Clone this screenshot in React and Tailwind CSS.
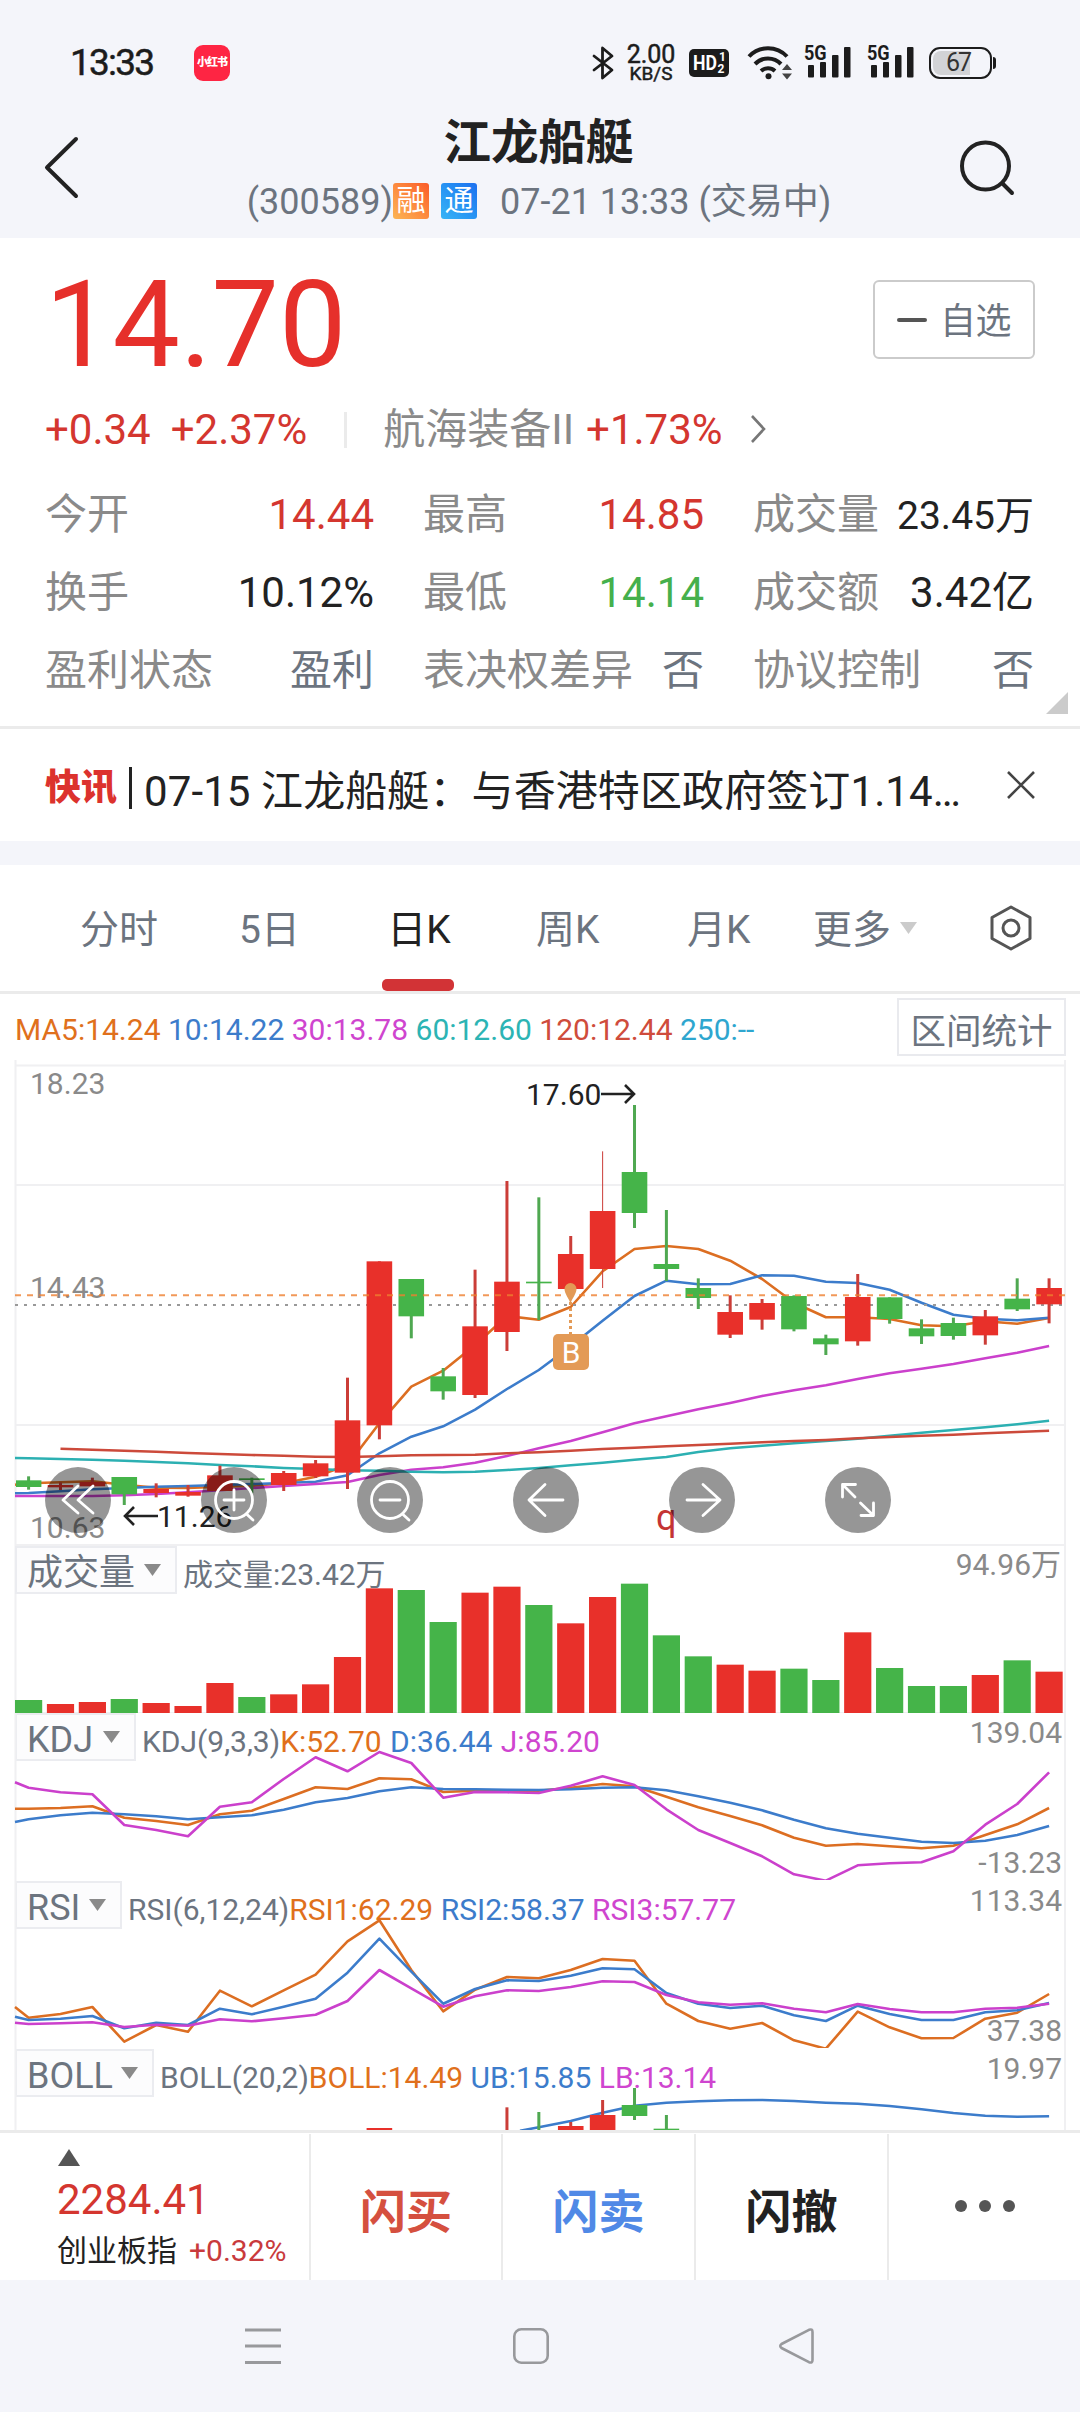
import React from "react";

const RED = "#e8302a";
const GREEN = "#45b449";
const WICK_RED = "#cb3d38";
const WICK_GREEN = "#4fa851";
const ORANGE = "#dc6e22";
const BLUE = "#3c7ccb";
const MAGENTA = "#cb40cc";
const TEAL = "#2cb0b2";
const BRICK = "#cc4a3b";

// x centre of the n-th trading day
const cx = (i) => 28.6 + i * 31.89;

// [direction, high, body top, body bottom, low], in thirds of a pixel
const CANDLES = [
  ["g", 1249, 1261, 1281, 1289], ["r", 1267, 1275, 1282, 1290], ["r", 1253, 1266, 1279, 1279],
  ["g", 1251, 1251, 1303, 1335], ["r", 1270, 1287, 1299, 1312], ["r", 1275, 1296, 1307, 1310],
  ["r", 1217, 1246, 1293, 1293], ["g", 1253, 1255, 1260, 1300], ["r", 1233, 1239, 1275, 1293],
  ["r", 1200, 1210, 1249, 1254], ["r", 953, 1081, 1238, 1287], ["r", 604, 604, 1096, 1138],
  ["g", 657, 657, 769, 835], ["g", 924, 949, 994, 1019], ["r", 629, 799, 1005, 1014],
  ["r", 363, 665, 816, 873], ["g", 412, 665, 670, 780], ["r", 528, 582, 687, 687],
  ["r", 274, 453, 627, 684], ["g", 135, 336, 459, 504], ["g", 450, 612, 627, 663],
  ["g", 655, 684, 714, 747], ["r", 706, 756, 824, 834], ["r", 717, 729, 779, 809],
  ["g", 706, 708, 808, 814], ["g", 824, 835, 853, 885], ["r", 642, 711, 844, 857],
  ["g", 712, 712, 777, 791], ["g", 778, 805, 829, 852], ["g", 773, 789, 828, 839],
  ["r", 750, 769, 826, 854], ["g", 655, 716, 748, 753], ["r", 655, 684, 733, 790],
];

const MA5 = [1270, 1267, 1264, 1274, 1283, 1284, 1280, 1278, 1270, 1250, 1215, 1090, 980, 932, 855, 768, 779, 741, 634, 567, 558, 567, 602, 657, 728, 772, 772, 777, 796, 799, 784, 791, 774];
const MA10 = [1299, 1294, 1288, 1284, 1280, 1278, 1275, 1272, 1269, 1265, 1246, 1180, 1130, 1099, 1049, 987, 930, 859, 782, 708, 662, 673, 672, 646, 647, 665, 669, 689, 728, 764, 776, 781, 773];
const MA30 = [1308, 1308, 1308, 1306, 1302, 1297, 1291, 1284, 1278, 1272, 1266, 1245, 1229, 1222, 1208, 1188, 1165, 1143, 1117, 1090, 1069, 1048, 1029, 1008, 991, 976, 957, 940, 926, 912, 895, 878, 858];
const MA60 = [1195, 1197, 1199, 1202, 1206, 1210, 1215, 1219, 1224, 1227, 1231, 1232, 1235, 1237, 1235, 1230, 1224, 1216, 1208, 1199, 1191, 1176, 1165, 1157, 1150, 1143, 1136, 1127, 1118, 1110, 1102, 1093, 1082];
const MA120 = [null, 1166, 1169, 1172, 1175, 1179, 1182, 1185, 1187, 1190, 1191, 1189, 1186, 1185, 1184, 1180, 1177, 1172, 1167, 1163, 1159, 1155, 1151, 1147, 1143, 1140, 1135, 1131, 1127, 1124, 1120, 1116, 1112];

const VOLUME = [480, 492, 486, 477, 489, 498, 429, 471, 463, 433, 351, 145, 150, 246, 158, 140, 195, 250, 171, 131, 286, 349, 374, 392, 386, 420, 277, 384, 438, 438, 405, 361, 395];

const K = [806, 804, 799, 833, 843, 855, 823, 812, 777, 742, 747, 715, 718, 756, 752, 752, 752, 743, 732, 739, 770, 802, 828, 856, 893, 917, 912, 919, 925, 917, 885, 853, 804];
const D = [838, 826, 818, 823, 829, 838, 832, 826, 809, 787, 774, 754, 742, 747, 748, 749, 750, 748, 743, 742, 751, 769, 788, 811, 839, 865, 881, 893, 905, 909, 902, 885, 858];
const J = [743, 757, 763, 855, 870, 889, 800, 787, 717, 652, 694, 636, 669, 773, 756, 757, 759, 737, 709, 735, 808, 870, 909, 949, 1003, 1022, 976, 970, 967, 934, 854, 792, 697];

const RSI1 = [413, 402, 381, 485, 435, 455, 332, 379, 331, 284, 184, 121, 270, 394, 329, 291, 295, 270, 237, 242, 371, 423, 446, 429, 481, 506, 395, 442, 475, 474, 416, 398, 342];
const RSI2 = [420, 416, 408, 445, 428, 435, 386, 403, 380, 356, 278, 176, 275, 371, 327, 301, 303, 287, 265, 268, 339, 371, 384, 377, 406, 423, 377, 402, 420, 420, 397, 391, 369];
const RSI3 = [432, 430, 427, 441, 434, 437, 418, 424, 415, 404, 363, 270, 325, 380, 349, 331, 333, 321, 304, 306, 345, 367, 374, 370, 386, 397, 372, 387, 397, 397, 386, 383, 371];

const UPPER = [742, 723, 698, 677, 668, 664, 661, 660, 663, 668, 671, 678, 688, 699, 707, 710, 709];
const BOLL_CANDLES = [
  [11, "r", 744, 744, 800], [15, "r", 682, 760, 800], [16, "g", 696, 760, 800], [17, "r", 726, 738, 800],
  [18, "r", 660, 705, 800], [19, "g", 624, 675, 708, 720], [20, "g", 705, 746, 800],
];

function Series({ data, color, start, from = 0 }) {
  const pts = data
    .map((v, i) => (v === null ? null : `${cx(i + from).toFixed(1)},${(v / 3).toFixed(1)}`))
    .filter(Boolean);
  if (start) pts.unshift(`${start[0]},${(start[1] / 3).toFixed(1)}`);
  return <polyline points={pts.join(" ")} fill="none" stroke={color} strokeWidth="2.6" strokeLinejoin="round" />;
}

function Candle({ i, dir, high, top, bottom, low, thin }) {
  const red = dir === "r";
  const x = cx(i);
  const left = Math.max(x - 12.8, 16);
  return (
    <g>
      <rect x={x - (thin ? 0.5 : 1.5)} y={high / 3} width={thin ? 1 : 3} height={(low - high) / 3} fill={red ? WICK_RED : WICK_GREEN} />
      <rect x={left} y={top / 3} width={x + 12.8 - left} height={(bottom - top) / 3} fill={red ? RED : GREEN} />
    </g>
  );
}

function Plot({ height, children, shift = 0, clip = false }) {
  return (
    <svg className={clip ? "absolute inset-0 overflow-hidden" : "absolute inset-0 overflow-visible"} width="1080" height={height}>
      <path d={`M15.5 0V${height}M1065 0V${height}`} stroke="#f0f0f2" strokeWidth="2" />
      <g transform={`translate(0 ${-shift})`}>{children}</g>
    </svg>
  );
}

function Picker({ children, width }) {
  return (
    <div className={`${width} ml-[15px] flex h-[48px] items-center justify-between self-start border-2 border-[#ebecf0] bg-[#fcfcfd] pt-[5px] pr-[14px] pl-[10px] text-[36px] leading-[36px] text-[#6c747f]`}>
      <span>{children}</span>
      <svg width="17" height="12" className="mb-[6px]"><path d="M0 0H17L8.5 12Z" fill="#8a8a8a" /></svg>
    </div>
  );
}

function PanelHead({ name, width, params, values }) {
  return (
    <div className="relative flex h-[57px] items-center text-[30px] leading-[30px] whitespace-pre">
      <Picker width={width}>{name}</Picker>
      <span className="ml-[6px] text-[#6c747f]">{params}</span>
      {values}
    </div>
  );
}

const SCALE = "absolute text-[30px] leading-[30px] text-[#8a8a8a]";

function RoundButton({ children }) {
  return (
    <div className="flex h-[66px] w-[66px] items-center justify-center rounded-full bg-black/41">
      <svg width="66" height="66" viewBox="-33 -33 66 66" fill="none" stroke="#fff" strokeWidth="2.8" strokeLinecap="round" strokeLinejoin="round">
        {children}
      </svg>
    </div>
  );
}

function Signal() {
  return (
    <div className="relative h-[36px] w-[47px] text-[#1c1c1c]">
      <span className="absolute -top-[2px] left-0 origin-left scale-x-[0.86] text-[21px] leading-[20px] font-bold">5G</span>
      <svg className="absolute inset-0" width="47" height="36" fill="#1c1c1c">
        <rect x="4" y="20" width="6" height="12.500" rx="1" />
        <rect x="16" y="17" width="6" height="15.500" rx="1" />
        <rect x="28" y="10" width="6.5" height="22.500" rx="1" />
        <rect x="40" y="2" width="6.5" height="30.500" rx="1" />
      </svg>
    </div>
  );
}

function StatusBar() {
  return (
    <div className="flex h-[126px] items-center">
      <span className="ml-[70px] w-[89px] text-[37px] leading-[40px] tracking-[-1.8px] text-[#1c1c1c] [-webkit-text-stroke:0.5px_#1c1c1c]">13:33</span>
      <div className="ml-[35px] flex h-[36px] w-[36px] items-center justify-center rounded-[9px] bg-[#fe2543] text-[11px] leading-[12px] font-black tracking-[-1px] whitespace-nowrap text-white">小红书</div>
      <svg className="ml-[362px]" width="23" height="34" viewBox="0 0 23 34" fill="none" stroke="#1c1c1c" strokeWidth="2.8" strokeLinejoin="round" strokeLinecap="round">
        <path d="M2 10 20 24 10.500 32V2L20 10 2 24" />
      </svg>
      <div className="ml-[10px] flex w-[52px] flex-col items-center pt-px text-[#1c1c1c]">
        <span className="text-[25px] leading-[20px]  [-webkit-text-stroke:0.5px_#1c1c1c]">2.00</span>
        <span className="text-[19px] leading-[18px] [-webkit-text-stroke:0.5px_#1c1c1c]">KB/S</span>
      </div>
      <div className="ml-[12px] flex h-[28px] w-[40px] items-center rounded-[5px] bg-[#1c1c1c] pl-[4px] text-white">
        <span className="w-[23px] origin-left scale-x-[0.84] text-[21px] leading-[24px] font-bold">HD</span>
        <span className="flex flex-col text-center text-[12px] leading-[12px] font-bold"><span className="pl-[3px]">1</span><span>2</span></span>
      </div>
      <svg className="ml-[18px]" width="46" height="36" viewBox="0 0 46 36" fill="none" stroke="#1c1c1c" strokeWidth="4">
        <path d="M2 11.500a26 26 0 0 1 38 0M8 19a18 18 0 0 1 26 0M14 26a10.500 10.500 0 0 1 14 0" />
        <circle cx="21.500" cy="31.300" r="3" fill="#1c1c1c" stroke="none" />
        <path d="M35 25 40 19 45 25ZM35 28.500 40 34.500 45 28.500Z" fill="#444" stroke="none" />
      </svg>
      <div className="ml-[11px]"><Signal /></div>
      <div className="ml-[16px]"><Signal /></div>
      <div className="ml-[15px] flex items-center">
        <div className="flex h-[32px] w-[63px] items-center rounded-[11px] border-2 border-[#1c1c1c] p-[2px]">
          <div className="flex h-[24px] w-[37px] items-center justify-end rounded-l-[8px] bg-[#d2d3d6] text-[25px] leading-[24px] tracking-[-2px] text-[#333]">67</div>
        </div>
        <div className="ml-px h-[12px] w-[3px] rounded-r bg-[#1c1c1c]" />
      </div>
    </div>
  );
}

function Header() {
  return (
    <header className="flex h-[112px] items-start">
      <svg className="mt-[8px] ml-[44px]" width="40" height="66" viewBox="0 0 40 66" fill="none" stroke="#222" strokeWidth="4" strokeLinecap="round" strokeLinejoin="round">
        <path d="M32 5 3 33.500 32 62" />
      </svg>
      <div className="ml-[36px] flex flex-1 flex-col items-center">
        <h1 className="-mt-[9px] text-[47.500px] leading-[52px] font-bold text-[#222]">江龙船艇</h1>
        <div className="mt-[12px] ml-[1px] flex items-center text-[36px] leading-[42px] whitespace-nowrap text-[#6c747f]">
          <span>(300589)</span>
          <span className="flex h-[36px] w-[36px] -mt-[3px] items-center justify-center rounded-[3px] bg-linear-to-tr from-[#fbb454] to-[#fa5a28] text-[29px] leading-[30px] text-white">融</span>
          <span className="ml-[12px] flex h-[36px] w-[36px] -mt-[3px] items-center justify-center rounded-[3px] bg-linear-to-tr from-[#38b4f6] to-[#1f70ef] text-[29px] leading-[30px] text-white">通</span>
          <span className="ml-[23px]">07-21 13:33 (交易中)</span>
        </div>
      </div>
      <svg className="mt-[12px] mr-[61px]" width="62" height="62" viewBox="0 0 62 62" fill="none" stroke="#222" strokeWidth="4" strokeLinecap="round">
        <circle cx="28.500" cy="28" r="23.500" />
        <path d="M45.500 45.500 55 55" />
      </svg>
    </header>
  );
}

function Stat({ label, value, tone }) {
  return (
    <div className="flex h-[78px] items-center justify-between">
      <span className="text-[#8a8a8a]">{label}</span>
      <span className={tone}>{value}</span>
    </div>
  );
}

function Quote() {
  const r = "text-[#d4362f]";
  const k = "text-[#222]";
  const s = "text-[#6c747f]";
  return (
    <section className="relative h-[491px] border-b-[3px] border-[#ebebeb] bg-white">
      <div className="flex h-[144px] items-start justify-between pr-[45px] pl-[45px]">
        <span className="mt-[27px] text-[120px] leading-[120px] text-[#e6302b]">14.70</span>
        <div className="mt-[42px] flex h-[79px] w-[162px] items-center rounded-[6px] border-2 border-[#cbcbcb] pl-[22px] text-[36px] leading-[42px] text-[#6c747f]">
          <span className="mr-[13px] h-[4px] w-[30px] rounded-sm bg-[#555]" />
          <span className="pt-[4px] tracking-[-0.500px]">自选</span>
        </div>
      </div>
      <div className="mt-[16px] flex h-[64px] items-center pl-[45px] text-[42px] leading-[48px] text-[#d4362f]">
        <span>+0.34</span>
        <span className="ml-[20px]">+2.37%</span>
        <span className="ml-[37px] h-[36px] w-[3px] bg-[#ebebeb]" />
        <span className="ml-[36px] text-[#8a8a8a]">航海装备II</span>
        <span className="ml-[12px]">+1.73%</span>
        <svg className="-mt-[2px] ml-[26px]" width="20" height="32" viewBox="0 0 20 32" fill="none" stroke="#777" strokeWidth="2.600"><path d="M3 3 15 16 3 29" /></svg>
      </div>
      <div className="mt-[14px] grid grid-cols-[329px_281px_281px] gap-x-[49px] pl-[45px] text-[42px] leading-[48px]">
        <Stat label="今开" value="14.44" tone={r} />
        <Stat label="最高" value="14.85" tone={r} />
        <Stat label="成交量" value="23.45万" tone="pt-[2px] text-[39px] text-[#222]" />
        <Stat label="换手" value="10.12%" tone={k} />
        <Stat label="最低" value="14.14" tone="text-[#45b04c]" />
        <Stat label="成交额" value="3.42亿" tone={k} />
        <Stat label="盈利状态" value="盈利" tone={s} />
        <Stat label="表决权差异" value="否" tone={s} />
        <Stat label="协议控制" value="否" tone={s} />
      </div>
      <svg className="absolute right-[12px] bottom-[12px]" width="22" height="22"><path d="M22 0V22H0Z" fill="#cbcbcb" /></svg>
    </section>
  );
}

function News() {
  return (
    <section className="flex h-[112px] items-center bg-white pl-[45px]">
      <span className="mt-[5px] text-[36px] leading-[42px] font-black text-[#dc322d]">快讯</span>
      <span className="mt-[6px] ml-[12px] h-[42px] w-[3px] bg-[#222]" />
      <span className="mt-[13px] ml-[12px] w-[830px] text-[42px] leading-[48px] tracking-[0.100px] whitespace-nowrap text-[#222]">07-15 江龙船艇：与香港特区政府签订1.14…</span>
      <svg className="ml-[32px]" width="30" height="30" fill="none" stroke="#444" strokeWidth="2.600"><path d="M2 2 28 28M28 2 2 28" /></svg>
    </section>
  );
}

function Tabs() {
  return (
    <nav className="mt-[24px] flex h-[129px] items-center border-b-[3px] border-[#ebebeb] bg-white text-[39px] leading-[48px] text-[#6c747f]">
      <span className="mt-[3px] ml-[80px] w-[159px]">分时</span>
      <span className="mt-[3px] w-[143px]">5日</span>
      <span className="relative mt-[3px] flex w-[72px] justify-center pl-[2px] text-[#222]">
        日K
        <i className="absolute -bottom-[37px] left-0 h-[12px] w-[72px] rounded-[5px] bg-[#d23336]" />
      </span>
      <span className="mt-[3px] ml-[82px] w-[151px]">周K</span>
      <span className="mt-[3px] w-[126px]">月K</span>
      <span className="mt-[3px]">更多</span>
      <svg className="ml-[9px]" width="17" height="12"><path d="M0 0H17L8.500 12Z" fill="#cbcbcb" /></svg>
      <svg className="ml-[72px]" width="44" height="48" viewBox="0 0 44 48" fill="none" stroke="#555" strokeWidth="3" strokeLinejoin="round">
        <path d="M22 3 41 13.500V34.500L22 45 3 34.500V13.500Z" />
        <circle cx="22" cy="24" r="8" />
      </svg>
    </nav>
  );
}

function MovingAverages() {
  return (
    <div className="flex h-[66px] items-center bg-white pl-[15px] text-[30px] leading-[30px] whitespace-pre">
      <span className="mt-[5px] flex-1">
        <span className="text-[#e0701c]">MA5:14.24 </span>
        <span className="text-[#3c7ccb]">10:14.22 </span>
        <span className="text-[#cf45cf]">30:13.78 </span>
        <span className="text-[#2cb4b4]">60:12.60 </span>
        <span className="text-[#cf4c3c]">120:12.44 </span>
        <span className="text-[#2ea6cf]">250:--</span>
      </span>
      <span className="mr-[14px] flex h-[58px] w-[169px] items-center justify-center border-2 border-[#e9eaee] pt-[9px] text-[35.500px] leading-[42px] text-[#6c747f]">区间统计</span>
    </div>
  );
}

function PricePanel() {
  return (
    <div className="relative h-[480px] bg-white">
      <Plot height={480}>
        <path d="M15 5.500H1065M15 125H1065M15 365H1065M15 485H1065" stroke="#f0f0f2" strokeWidth="2" />
        <Series data={MA5} color={ORANGE} start={[15, 1274]} />
        <Series data={MA10} color={BLUE} start={[15, 1300]} />
        <Series data={MA30} color={MAGENTA} start={[15, 1308]} />
        <Series data={MA60} color={TEAL} start={[15, 1194]} />
        <Series data={MA120} color={BRICK} />
        <path d="M15 245H1065" stroke="#999" strokeWidth="2" strokeDasharray="3 6" />
        {CANDLES.map(([dir, high, top, bottom, low], i) => (
          <Candle key={i} i={i} dir={dir} high={high} top={top} bottom={bottom} low={low} thin={i === 18} />
        ))}
      </Plot>
      <span className={`${SCALE} top-[9px] left-[30px]`}>18.23</span>
      <span className={`${SCALE} top-[213px] left-[30px]`}>14.43</span>
      <span className={`${SCALE} top-[453px] left-[30px]`}>10.63</span>
      <svg className="absolute inset-0 overflow-visible" width="1080" height="480" fill="none">
        <path d="M15 235.300H1065" stroke="#ee8030" strokeOpacity="0.800" strokeWidth="2" strokeDasharray="6 6" />
        <path d="M570.500 242V274" stroke="#e39a56" strokeWidth="3" strokeDasharray="3 3" />
        <path d="M570.500 244C569 238 564.500 234 564.500 229a6 6 0 0 1 12 0C576.500 234 572 238 570.500 244Z" fill="#e39a56" />
        <path d="M601 34H633M625 25 634 34 625 43" stroke="#222" strokeWidth="2.600" />
        <path d="M158 456H126M134 447 125 456 134 465" stroke="#222" strokeWidth="2.600" />
      </svg>
      <span className="absolute top-[274px] left-[553px] flex h-[36px] w-[36px] items-center justify-center rounded-[5px] bg-[#e39a56] pt-[2px] text-[30px] leading-[36px] text-white">B</span>
      <span className="absolute top-[20px] left-[526px] text-[30px] leading-[30px] text-[#222]">17.60</span>
      <span className="absolute top-[442px] left-[157px] text-[30px] leading-[30px] text-[#222]">11.26</span>
      <span className="absolute top-[440px] left-[656px] text-[36px] leading-[36px] text-[#c43434]">q</span>
      <div className="absolute top-[407px] left-[45px] z-10 flex gap-[90px]">
        <RoundButton><path d="M0 -14 -15 0 0 13M15 -14 0 0 15 13" /></RoundButton>
        <RoundButton><circle r="18.500" /><path d="M12.500 14 19 20M-10 0H10M0 -10V10" /></RoundButton>
        <RoundButton><circle r="18.500" /><path d="M12.500 14 19 20M-10 0H10" /></RoundButton>
        <RoundButton><path d="M17 0H-17M-1 -15.500 -17 0 -1 15.500" /></RoundButton>
        <RoundButton><path d="M-15 0H18M1 -15.500 18 0 1 15.500" /></RoundButton>
        <RoundButton><path d="M-15.500 -3V-15.500H-2.500M-15 -15 -3 -3M2.500 3 15.500 15.500M3 15.500H15.500V3" /></RoundButton>
      </div>
    </div>
  );
}

function Charts() {
  return (
    <div>
      <PricePanel />
      <div className="relative h-[173px] bg-white pt-[6px]">
        <Plot height={173}>
          <path d="M15 5H1065M15 173H1065" stroke="#f0f0f2" strokeWidth="2" />
          {VOLUME.map((v, i) => {
            const left = Math.max(cx(i) - 13.6, 15);
            return <rect key={i} x={left} y={v / 3} width={cx(i) + 13.6 - left} height={173 - v / 3} fill={CANDLES[i][0] === "r" ? RED : GREEN} />;
          })}
        </Plot>
        <PanelHead name="成交量" width="w-[162px]" params="成交量:23.42万" />
        <span className={`${SCALE} top-[10px] right-[19px]`}>94.96万</span>
      </div>
      <div className="relative h-[167px] bg-white">
        <PanelHead
          name="KDJ" width="w-[121px]" params="KDJ(9,3,3)"
          values={<><span className="text-[#e0701c]">K:52.70 </span><span className="ml-px text-[#3c7ccb]">D:36.44 </span><span className="ml-px text-[#cf45cf]">J:85.20</span></>}
        />
        <Plot height={167} shift={173}>
          <path d="M15 341H1065" stroke="#f0f0f2" strokeWidth="2" />
          <Series data={K} color={ORANGE} start={[15, 806]} />
          <Series data={D} color={BLUE} start={[15, 846]} />
          <Series data={J} color={MAGENTA} start={[15, 727]} />
        </Plot>
        <span className={`${SCALE} top-[5px] right-[18px]`}>139.04</span>
        <span className={`${SCALE} top-[135px] right-[18px]`}>-13.23</span>
      </div>
      <div className="relative h-[168px] bg-white pt-px">
        <PanelHead
          name="RSI" width="w-[107px]" params="RSI(6,12,24)"
          values={<><span className="text-[#e0701c]">RSI1:62.29 </span><span className="text-[#3c7ccb]">RSI2:58.37 </span><span className="text-[#cf45cf]">RSI3:57.77</span></>}
        />
        <Plot height={168}>
          <path d="M15 169H1065" stroke="#f0f0f2" strokeWidth="2" />
          <Series data={RSI1} color={ORANGE} start={[15, 381]} />
          <Series data={RSI2} color={BLUE} start={[15, 410]} />
          <Series data={RSI3} color={MAGENTA} start={[15, 428]} />
        </Plot>
        <span className={`${SCALE} top-[6px] right-[18px]`}>113.34</span>
        <span className={`${SCALE} top-[136px] right-[18px]`}>37.38</span>
      </div>
      <div className="relative h-[82px] bg-white pt-px">
        <PanelHead
          name="BOLL" width="w-[139px]" params="BOLL(20,2)"
          values={<><span className="text-[#e0701c]">BOLL:14.49 </span><span className="text-[#3c7ccb]">UB:15.85 </span><span className="text-[#cf45cf]">LB:13.14</span></>}
        />
        <Plot height={82} shift={168} clip>
          <Series data={UPPER} color={BLUE} start={[520, 752]} from={16} />
          {BOLL_CANDLES.map(([i, dir, high, top, bottom, low]) => (
            <Candle key={i} i={i} dir={dir} high={high} top={top} bottom={bottom} low={low ?? bottom} />
          ))}
        </Plot>
        <span className={`${SCALE} top-[6px] right-[18px]`}>19.97</span>
      </div>
    </div>
  );
}

function TradeBar() {
  const cell = "mt-px flex items-center justify-center border-l-2 border-[#ebebeb] text-[46px] leading-[52px] font-bold";
  return (
    <footer className="grid h-[150px] grid-cols-[309px_192px_193px_193px_193px] border-t-[3px] border-[#ebebeb] bg-white">
      <div className="flex flex-col pl-[57px]">
        <svg className="mt-[16px] ml-px" width="22" height="17"><path d="M11 0 22 17H0Z" fill="#555" /></svg>
        <span className="mt-[10px] text-[42px] leading-[48px] text-[#d4362f]">2284.41</span>
        <span className="mt-[9px] flex gap-[12px] text-[30px] leading-[36px] whitespace-nowrap"><span className="text-[#222]">创业板指</span><span className="text-[#c93a3c]">+0.32%</span></span>
      </div>
      <div className={`${cell} pt-[9px] text-[#d5503f]`}>闪买</div>
      <div className={`${cell} pt-[9px] text-[#5089e6]`}>闪卖</div>
      <div className={`${cell} pt-[9px] text-[#222]`}>闪撤</div>
      <div className={`${cell} gap-[12px] pb-[2px]`}>
        <i className="h-[12px] w-[12px] rounded-full bg-[#555]" />
        <i className="h-[12px] w-[12px] rounded-full bg-[#555]" />
        <i className="h-[12px] w-[12px] rounded-full bg-[#555]" />
      </div>
    </footer>
  );
}

function SystemNav() {
  return (
    <div className="flex h-[132px] items-center pl-[243px]">
      <svg width="40" height="40" stroke="#98999c" strokeWidth="3"><path d="M2 4H38M2 20H38M2 36.500H38" /></svg>
      <svg className="ml-[228px]" width="40" height="40" fill="none" stroke="#98999c" strokeWidth="2.600"><rect x="3.300" y="3.300" width="33.400" height="33.400" rx="7" /></svg>
      <svg className="ml-[225px]" width="40" height="40" fill="none" stroke="#98999c" strokeWidth="2.600" strokeLinejoin="round"><path d="M5.500 18 33 3.800Q36.500 2.500 36.500 6V34Q36.500 37.500 33 36.200L5.500 22Q3 20 5.500 18Z" /></svg>
    </div>
  );
}

export default function App() {
  return (
    <main lang="zh-CN" className="flex h-[2412px] w-[1080px] flex-col overflow-hidden bg-[#f4f5fa] font-['Roboto','Noto_Sans_CJK_SC',sans-serif]">
      <StatusBar />
      <Header />
      <Quote />
      <News />
      <Tabs />
      <MovingAverages />
      <Charts />
      <TradeBar />
      <SystemNav />
    </main>
  );
}
